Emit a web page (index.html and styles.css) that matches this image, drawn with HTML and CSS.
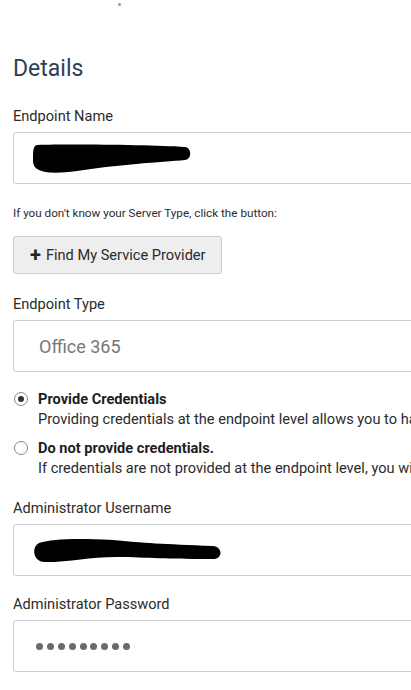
FILE: index.html
```html
<!DOCTYPE html>
<html lang="en">
<head>
<meta charset="utf-8">
<title>Details</title>
<link rel="stylesheet" href="styles.css">
</head>
<body>
<main class="page">
  <span class="speck"></span>
  <h2 class="title">Details</h2>

  <label class="label">Endpoint Name</label>
  <div class="input">
    <svg class="redact" width="160" height="31" viewBox="0 0 160 31"><path d="M4 2 C40 1 120 2 152 4 C159 5 159 16 152 17 C130 19 80 22 44 28 C14 32 0 29 0 18 C0 8 0 3 4 2 Z" fill="#000"/></svg>
  </div>

  <p class="hint">If you don't know your Server Type, click the button:</p>
  <button class="btn" type="button"><span class="plus">+</span>Find My Service Provider</button>

  <label class="label label-gap">Endpoint Type</label>
  <div class="input input-text">Office 365</div>

  <div class="radios">
    <div class="radio-item">
      <span class="radio checked"></span>
      <div class="radio-body">
        <div class="radio-title">Provide Credentials</div>
        <div class="radio-desc">Providing credentials at the endpoint level allows you to have all accounts share the same credentials.</div>
      </div>
    </div>
    <div class="radio-item">
      <span class="radio"></span>
      <div class="radio-body">
        <div class="radio-title">Do not provide credentials.</div>
        <div class="radio-desc">If credentials are not provided at the endpoint level, you will need to provide them for each account.</div>
      </div>
    </div>
  </div>

  <label class="label label-gap">Administrator Username</label>
  <div class="input">
    <svg class="redact" width="190" height="25" viewBox="0 0 190 25"><path d="M6 5 C20 1 40 0 80 2 C110 5 130 6 180 8 C190 9 190 21 180 21 C140 21 120 20 90 19 C60 18 40 24 12 24 C0 24 -2 9 6 5 Z" fill="#000"/></svg>
  </div>

  <label class="label label-gap2">Administrator Password</label>
  <div class="input">
    <span class="dots"><i></i><i></i><i></i><i></i><i></i><i></i><i></i><i></i><i></i></span>
  </div>
</main>
</body>
</html>
```

FILE: styles.css
```css
html, body {
  margin: 0;
  padding: 0;
  background: #fff;
  overflow: hidden;
}
body {
  font-family: Roboto, "Liberation Sans", Arial, sans-serif;
  color: #2b2b2b;
}
.page {
  position: relative;
  padding: 55px 0 0 13px;
  display: flex;
  flex-direction: column;
  align-items: flex-start;
  width: 460px;
}
.speck {
  position: absolute;
  left: 118px;
  top: 3px;
  width: 3px;
  height: 3px;
  border-radius: 50%;
  background: #999;
}
.title {
  margin: 0;
  font-size: 23px;
  line-height: 28px;
  font-weight: 400;
  color: #2e3f51;
}
.label {
  display: block;
  margin-top: 23px;
  font-size: 14.6px;
  line-height: 20px;
  color: #2b2b2b;
}
.label-gap { margin-top: 20px; }
.label-gap2 { margin-top: 18px; }
.input {
  box-sizing: border-box;
  margin-top: 6px;
  width: 440px;
  height: 52px;
  border: 1px solid #cfcfcf;
  border-radius: 3px;
  background: #fff;
  display: flex;
  align-items: center;
  padding-left: 19px;
}
.input-text {
  padding-left: 25px;
  font-size: 18px;
  color: #777;
}
.redact { display: block; }
.hint {
  margin: 21px 0 0;
  font-size: 11.7px;
  line-height: 16px;
  color: #2b2b2b;
}
.btn {
  margin-top: 15px;
  box-sizing: border-box;
  height: 38px;
  width: 209px;
  padding: 0 0 0 16px;
  display: flex;
  align-items: center;
  background: #eee;
  border: 1px solid #ccc;
  border-radius: 3px;
  font-family: Roboto, "Liberation Sans", Arial, sans-serif;
  font-size: 14.6px;
  color: #2b2b2b;
}
.plus {
  font-weight: 700;
  font-size: 20px;
  margin-right: 5px;
  line-height: 1;
  color: #222;
}
.radios {
  margin-top: 17px;
  display: flex;
  flex-direction: column;
  gap: 9px;
  width: 460px;
}
.radio-item {
  display: flex;
  align-items: flex-start;
  gap: 10px;
}
.radio {
  box-sizing: border-box;
  flex: none;
  margin: 3px 0 0 1px;
  width: 14px;
  height: 14px;
  border: 1px solid #888;
  border-radius: 50%;
  display: flex;
  align-items: center;
  justify-content: center;
}
.radio.checked::after {
  content: "";
  width: 6px;
  height: 6px;
  border-radius: 50%;
  background: #333;
}
.radio-body {
  font-size: 14.6px;
  line-height: 20px;
  white-space: nowrap;
}
.radio-title {
  font-weight: 700;
  color: #1e1e1e;
}
.radio-desc { color: #2b2b2b; }
.dots {
  display: flex;
  gap: 3.9px;
  margin-left: 3px;
}
.dots i {
  display: block;
  width: 7px;
  height: 7px;
  border-radius: 50%;
  background: #6a6a6a;
}
```
